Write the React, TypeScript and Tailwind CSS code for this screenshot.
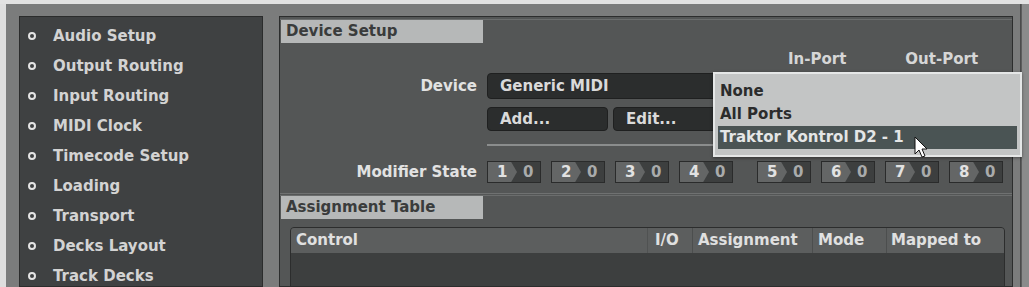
import { FC } from "react";

const sidebarItems = [
  "Audio Setup",
  "Output Routing",
  "Input Routing",
  "MIDI Clock",
  "Timecode Setup",
  "Loading",
  "Transport",
  "Decks Layout",
  "Track Decks",
];

const ModifierBox: FC<{ n: number; extraGap?: boolean }> = ({ n, extraGap }) => (
  <div
    className={`relative flex h-[22px] w-[54px] border border-[#2a2b2b] bg-[#3d3f3f] ${
      extraGap ? "ml-[24px]" : "ml-[10px]"
    } first:ml-0`}
  >
    <div className="flex h-full w-[29px] items-center bg-[#646666] pl-[9px] text-[#e2e2e2] [clip-path:polygon(0_0,80%_0,100%_50%,80%_100%,0_100%)]">
      {n}
    </div>
    <div className="flex h-full items-center pl-[6px] text-[#a9abab]">0</div>
  </div>
);

const SectionTab: FC<{ title: string }> = ({ title }) => (
  <div className="flex h-[24px] border-t border-[#6b6d6d]">
    <div className="ml-[1px] flex w-[202px] items-center bg-[#b6b8b8] pl-[5px] text-[#3a3c3c]">
      {title}
    </div>
  </div>
);

export default function App() {
  return (
    <div className="relative h-[287px] w-[1029px] overflow-hidden bg-[#8a8b8b] font-['DejaVu_Sans',sans-serif] text-[15px] font-bold">
      <div className="h-[4px] bg-[#e2e2e2]" />
      <div className="flex h-[283px]">
        <div className="w-[6px] bg-[#dedede]" />
        <div className="flex w-[1015px] gap-[16px] border-r border-[#4a4b4b] bg-[#7b7c7c] pl-[13px] pt-[12px]">
          {/* left menu */}
          <div className="h-full w-[244px] border border-[#2b2c2c] bg-[#3f4142] pt-[4px]">
            {sidebarItems.map((item) => (
              <div key={item} className="flex h-[30px] items-center pl-[8px] text-[#d3d3d3]">
                <span className="h-[8px] w-[8px] rounded-full border-2 border-[#e4e4e4]" />
                <span className="ml-[17px]">{item}</span>
              </div>
            ))}
          </div>

          {/* right panel */}
          <div className="h-full w-[734px] overflow-hidden border border-[#2c2d2d] bg-[#545656] pt-[2px]">
            <SectionTab title="Device Setup" />

            <div className="mt-[7px] flex h-[18px] items-center pl-[508px] text-[#d6d6d6]">
              <span>In-Port</span>
              <span className="ml-[59px]">Out-Port</span>
            </div>

            <div className="mt-[5px] flex h-[26px] items-center">
              <span className="w-[197px] text-right text-[#e2e2e2]">Device</span>
              <div className="ml-[10px] flex h-full w-[270px] items-center rounded-[4px] border border-[#1f2020] bg-[#2b2d2d] pl-[12px] text-[#dadada]">
                Generic MIDI
              </div>
            </div>

            <div className="mt-[8px] flex h-[24px] pl-[207px]">
              <div className="flex w-[121px] items-center rounded-[4px] border border-[#1f2020] bg-[#2b2d2d] pl-[12px] text-[#dadada]">
                Add...
              </div>
              <div className="ml-[5px] flex w-[110px] items-center rounded-[4px] border border-[#1f2020] bg-[#2b2d2d] pl-[12px] text-[#dadada]">
                Edit...
              </div>
            </div>

            <div className="ml-[207px] mr-[8px] mt-[13px] h-[2px] bg-[#8b8d8d]" />

            <div className="mt-[15px] flex h-[22px] items-center">
              <span className="w-[197px] text-right text-[#e2e2e2]">Modifier State</span>
              <div className="ml-[10px] flex">
                {[1, 2, 3, 4, 5, 6, 7, 8].map((n) => (
                  <ModifierBox key={n} n={n} extraGap={n === 5} />
                ))}
              </div>
            </div>

            <div className="mt-[10px] h-[1px] bg-[#6f7171]" />
            <div className="mt-[1px]">
              <SectionTab title="Assignment Table" />
            </div>

            <div className="ml-[10px] mt-[8px] h-[60px] w-[715px] overflow-hidden rounded-t-[4px] border border-[#2c2d2d] bg-[#3d3f3f]">
              <div className="flex h-[25px] items-center bg-[#5c5e5e] text-[#e0e0e0]">
                <div className="flex h-full w-[357px] items-center border-r border-[#505252] pl-[5px]">
                  Control
                </div>
                <div className="flex h-full w-[45px] items-center border-r border-[#4c4e4e] pl-[7px]">
                  I/O
                </div>
                <div className="flex h-full w-[120px] items-center border-r border-[#4c4e4e] pl-[5px]">
                  Assignment
                </div>
                <div className="flex h-full w-[74px] items-center border-r border-[#4c4e4e] pl-[5px]">
                  Mode
                </div>
                <div className="flex h-full flex-1 items-center pl-[4px]">Mapped to</div>
              </div>
            </div>
          </div>
        </div>
        <div className="w-[1px] bg-[#5c5d5d]" />
      </div>

      {/* port popup */}
      <div className="absolute left-[713px] top-[72px] h-[85px] w-[309px] border-2 border-[#e5e7e7] bg-[#c3c5c5] pt-[6px] shadow-[0_1px_3px_rgba(0,0,0,0.4)]">
        <div className="flex h-[23px] items-center pl-[5px] text-[#2b2c2c]">None</div>
        <div className="flex h-[23px] items-center pl-[5px] text-[#2b2c2c]">All Ports</div>
        <div className="mx-[3px] flex h-[23px] items-center bg-[#4a5454] pl-[2px] text-[#e4e6e6]">
          Traktor Kontrol D2 - 1
        </div>
      </div>

      {/* mouse cursor */}
      <svg
        className="absolute left-[914px] top-[136px]"
        width="16"
        height="24"
        viewBox="0 0 16 24"
      >
        <path
          d="M1 1 L1 18 L5 14 L8 21 L11 20 L8 13 L13 13 Z"
          fill="#ffffff"
          stroke="#111111"
          strokeWidth="1"
          strokeLinejoin="round"
        />
      </svg>
    </div>
  );
}
